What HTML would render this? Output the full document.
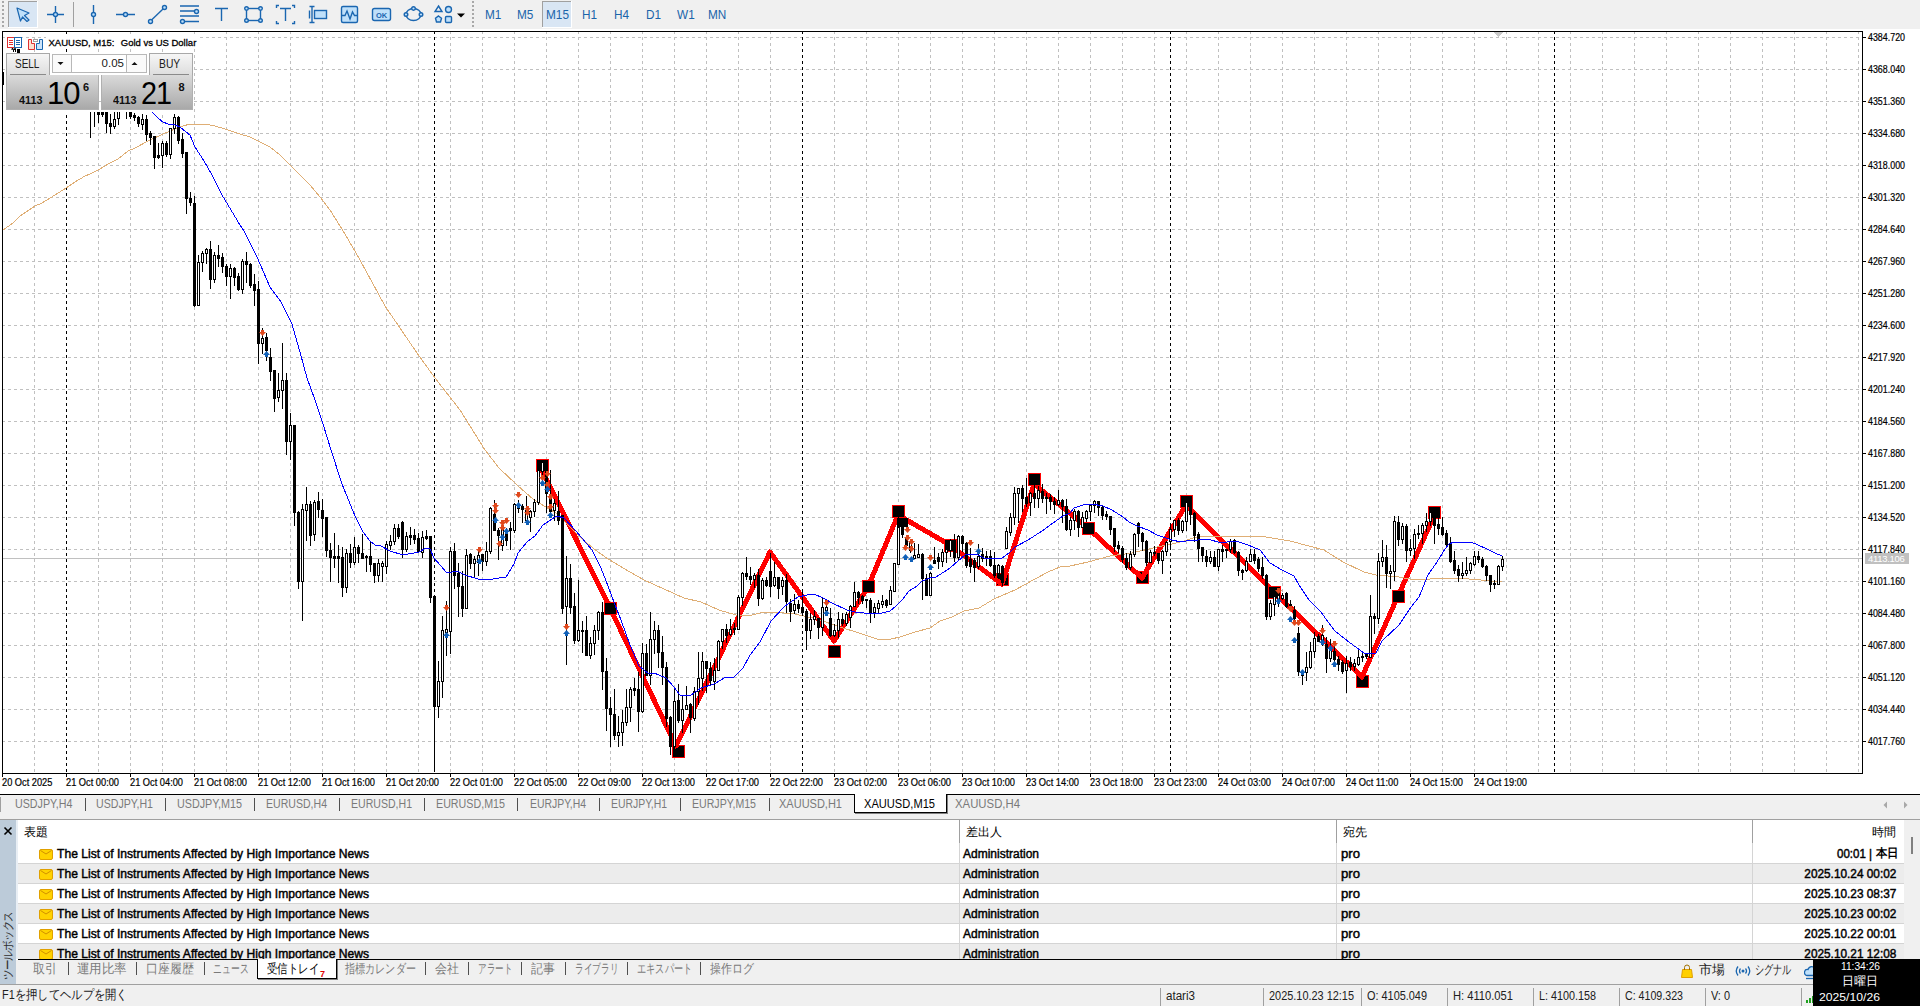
<!DOCTYPE html>
<html><head><meta charset="utf-8">
<style>
*{box-sizing:border-box}
html,body{margin:0;padding:0;width:1920px;height:1006px;overflow:hidden;background:#fff;font-family:"Liberation Sans",sans-serif;position:relative}
.a{position:absolute}
#tb{left:0;top:0;width:1920px;height:29px;background:#f0f0f0}
.tf{position:absolute;top:6.5px;font-size:12.7px;color:#1a64aa;line-height:16px;transform:scaleX(0.93);transform-origin:left top}
.tab{position:absolute;top:797px;font-size:12.5px;color:#808080;line-height:16px;white-space:nowrap}
.tsep{position:absolute;width:1px;height:13px;background:#606060}
.row{position:absolute;left:18px;width:1887px;height:20px;font-size:12.5px;font-weight:bold;color:#000;line-height:20px;white-space:nowrap}
.row span{position:absolute}
.env{position:absolute;left:21px;top:6px;width:13px;height:10px;background:#ffd000;border:1px solid #d89a00;border-radius:2px}
.btab{position:absolute;top:962px;font-size:12.5px;color:#808080;line-height:16px;white-space:nowrap}
.st{position:absolute;top:988px;font-size:12.5px;color:#000;line-height:16px;white-space:nowrap}
.ssep{position:absolute;top:987px;width:1px;height:19px;background:#a0a0a0}
</style></head><body>
<div id="tb" class="a">
 <svg width="1920" height="29" style="position:absolute;left:0;top:0">
  <g fill="#a8a8a8"><rect x="2" y="1" width="2" height="2"/><rect x="2" y="5" width="2" height="2"/><rect x="2" y="9" width="2" height="2"/><rect x="2" y="13" width="2" height="2"/><rect x="2" y="17" width="2" height="2"/><rect x="2" y="21" width="2" height="2"/><rect x="2" y="25" width="2" height="2"/></g>
  <rect x="8" y="1" width="30" height="27" fill="#fff"/><rect x="8" y="1" width="29" height="26" fill="#a0a0a0"/><rect x="9" y="2" width="28" height="25" fill="#d9e6f4"/>
  <path d="M17 8 L29 13 L24.5 15.5 L29 20 L27 21.5 L22.5 17 L20.5 21 Z" fill="#bfe0fa" stroke="#1a66b0" stroke-width="1.2" stroke-linejoin="round"/>
  <g stroke="#1a66b0" stroke-width="1.4" fill="#bfe0fa">
   <path d="M47 14.5H53M58 14.5H64M55.5 6V12M55.5 17V23" fill="none"/><circle cx="55.5" cy="14.5" r="2"/>
   <path d="M93.5 5V12M93.5 17V24" fill="none"/><circle cx="93.5" cy="14.5" r="2"/>
   <path d="M116 14.5H123M128 14.5H135" fill="none"/><circle cx="125.5" cy="14.5" r="2"/>
   <path d="M151.5 20L163 9" fill="none"/><circle cx="150.5" cy="21.5" r="2"/><circle cx="164.5" cy="7.5" r="2"/>
   <path d="M180 6H199M180 11H194M180 16H199M185 21.5H199" fill="none"/><circle cx="196.5" cy="11.5" r="2"/><circle cx="182.5" cy="21.5" r="2"/>
   <path d="M215 8.5H228M221.5 8.5V21" fill="none"/>
   <rect x="246.5" y="8.5" width="14" height="12" fill="none"/><circle cx="246.5" cy="8.5" r="1.8"/><circle cx="260.5" cy="8.5" r="1.8"/><circle cx="246.5" cy="20.5" r="1.8"/><circle cx="260.5" cy="20.5" r="1.8"/>
   <path d="M276.5 8V5.5H279M292 5.5H294.5V8M276.5 21V23.5H279M292 23.5H294.5V21M280 8.5H291M285.5 8.5V21" fill="none"/>
   <rect x="314.5" y="10.5" width="12" height="8"/><path d="M309.5 6.5H314.5M312 6.5V22.5M309.5 22.5H314.5M309.5 10.5V18.5" fill="none"/>
   <rect x="341.5" y="6.5" width="16" height="16" rx="1.5"/><path d="M342 15.5L345 15.5L347 11L350 19L352.5 12L354.5 15.5L357 15.5" fill="none"/>
   <rect x="372.5" y="8.5" width="18" height="12" rx="2"/>
   <ellipse cx="413.5" cy="14.5" rx="7.5" ry="6" fill="none"/><circle cx="413.5" cy="8.5" r="1.8"/><circle cx="406" cy="14.5" r="1.8"/><circle cx="421" cy="14.5" r="1.8"/>
   <path d="M438.5 6L442 11.5H435Z" fill="none"/><circle cx="448.5" cy="9.5" r="3"/><path d="M438.5 16L441.5 18.3L440.5 22H436.5L435.5 18.3Z"/><rect x="445.5" y="16.5" width="6" height="6" rx="1"/>
  </g>
  <text x="376" y="18" font-family="Liberation Sans" font-size="7.5" font-weight="bold" fill="#1a66b0">OK</text>
  <path d="M457 13.5H465L461 17.5Z" fill="#000"/>
  <path d="M73.5 2V27" stroke="#a0a0a0"/>
  <g fill="#a8a8a8"><rect x="472" y="1" width="2" height="2"/><rect x="472" y="5" width="2" height="2"/><rect x="472" y="9" width="2" height="2"/><rect x="472" y="13" width="2" height="2"/><rect x="472" y="17" width="2" height="2"/><rect x="472" y="21" width="2" height="2"/><rect x="472" y="25" width="2" height="2"/></g>
  <rect x="542" y="1" width="30" height="27" fill="#fff"/><rect x="542" y="1" width="29" height="26" fill="#a0a0a0"/><rect x="543" y="2" width="28" height="25" fill="#d9e6f4"/>
 </svg>
 <span class="tf" style="left:485px">M1</span>
 <span class="tf" style="left:517px">M5</span>
 <span class="tf" style="left:546px">M15</span>
 <span class="tf" style="left:582px">H1</span>
 <span class="tf" style="left:614px">H4</span>
 <span class="tf" style="left:646px">D1</span>
 <span class="tf" style="left:677px">W1</span>
 <span class="tf" style="left:708px">MN</span>
</div>
<svg width="1920" height="1006" style="position:absolute;left:0;top:0" shape-rendering="crispEdges">
<path d="M34.5 31V773 M66.5 31V773 M98.5 31V773 M130.5 31V773 M162.5 31V773 M194.5 31V773 M226.5 31V773 M258.5 31V773 M290.5 31V773 M322.5 31V773 M354.5 31V773 M386.5 31V773 M418.5 31V773 M450.5 31V773 M482.5 31V773 M514.5 31V773 M546.5 31V773 M578.5 31V773 M610.5 31V773 M642.5 31V773 M674.5 31V773 M706.5 31V773 M738.5 31V773 M770.5 31V773 M802.5 31V773 M834.5 31V773 M866.5 31V773 M898.5 31V773 M930.5 31V773 M962.5 31V773 M994.5 31V773 M1026.5 31V773 M1058.5 31V773 M1090.5 31V773 M1122.5 31V773 M1154.5 31V773 M1186.5 31V773 M1218.5 31V773 M1250.5 31V773 M1282.5 31V773 M1314.5 31V773 M1346.5 31V773 M1378.5 31V773 M1410.5 31V773 M1442.5 31V773 M1474.5 31V773 M1506.5 31V773 M1538.5 31V773 M1570.5 31V773 M1602.5 31V773 M1634.5 31V773 M1666.5 31V773 M1698.5 31V773 M1730.5 31V773 M1762.5 31V773 M1794.5 31V773 M1826.5 31V773 M1858.5 31V773 M2 37.5H1862 M2 69.5H1862 M2 101.5H1862 M2 133.5H1862 M2 165.5H1862 M2 197.5H1862 M2 229.5H1862 M2 261.5H1862 M2 293.5H1862 M2 325.5H1862 M2 357.5H1862 M2 389.5H1862 M2 421.5H1862 M2 453.5H1862 M2 485.5H1862 M2 517.5H1862 M2 549.5H1862 M2 581.5H1862 M2 613.5H1862 M2 645.5H1862 M2 677.5H1862 M2 709.5H1862 M2 741.5H1862" stroke="#c0c0c0" stroke-width="1" stroke-dasharray="3 3" fill="none"/>
<path d="M66.5 31V773 M434.5 31V773 M802.5 31V773 M1170.5 31V773 M1554.5 31V773" stroke="#000" stroke-width="1" stroke-dasharray="3 3" fill="none"/>
<path d="M3 558.5H1862" stroke="#c0c0c0" stroke-width="1"/>
<g>
<rect x="672.5" y="745.5" width="12" height="12" fill="#000" stroke="#ff0000" stroke-width="1"/>
<rect x="828.5" y="645.5" width="12" height="12" fill="#000" stroke="#ff0000" stroke-width="1"/>
<rect x="996.5" y="573.5" width="12" height="12" fill="#000" stroke="#ff0000" stroke-width="1"/>
<rect x="1136.5" y="571.5" width="12" height="12" fill="#000" stroke="#ff0000" stroke-width="1"/>
<rect x="1356.5" y="675.5" width="12" height="12" fill="#000" stroke="#ff0000" stroke-width="1"/>
<polyline points="542,470 610,608 676,746 770,552 834,641 868,587 898,515 950,545 1002,584 1034,484 1088,528 1142,578 1186,505 1274,592 1362,677 1398,596 1434,516" fill="none" stroke="#ff0000" stroke-width="5" stroke-linejoin="round" shape-rendering="crispEdges"/>
<rect x="536.5" y="459.5" width="12" height="12" fill="#000" stroke="#ff0000" stroke-width="1"/>
<rect x="604.5" y="602.5" width="12" height="12" fill="#000" stroke="#ff0000" stroke-width="1"/>
<rect x="862.5" y="580.5" width="12" height="12" fill="#000" stroke="#ff0000" stroke-width="1"/>
<rect x="892.5" y="505.5" width="12" height="12" fill="#000" stroke="#ff0000" stroke-width="1"/>
<rect x="944.5" y="539.5" width="12" height="12" fill="#000" stroke="#ff0000" stroke-width="1"/>
<rect x="1028.5" y="473.5" width="12" height="12" fill="#000" stroke="#ff0000" stroke-width="1"/>
<rect x="1082.5" y="522.5" width="12" height="12" fill="#000" stroke="#ff0000" stroke-width="1"/>
<rect x="1180.5" y="495.5" width="12" height="12" fill="#000" stroke="#ff0000" stroke-width="1"/>
<rect x="1268.5" y="586.5" width="12" height="12" fill="#000" stroke="#ff0000" stroke-width="1"/>
<rect x="1392.5" y="590.5" width="12" height="12" fill="#000" stroke="#ff0000" stroke-width="1"/>
<rect x="1428.5" y="506.5" width="12" height="12" fill="#000" stroke="#ff0000" stroke-width="1"/>
<rect x="897" y="518" width="11" height="9" fill="#000"/>
<polyline points="3,230 13,223 20,216 35,206 42,203 55,195 66,188 75,182 85,176 90,174 98,170 110,163 118,159 128,151 135,148 150,140 163,134 175,129 183,126 190,124 195,125 205,124 215,126 225,129 240,134 250,137 260,142 270,147 280,155 290,165 300,175 310,185 320,197 330,210 345,234 360,260 385,306 417,353 435,378 460,410 485,450 499,468 517,485 534,500 556,513 565,522 578,535 594,549 608,559 630,572 644,580 684,598 701,602 719,610 736,615 748,616 760,613 771,612 784,613 795,614 817,619 840,627 862,634 877,639 891,639 900,637 915,632 930,628 940,621 952,617 964,611 979,608 989,602 994,599 1010,592 1015,590 1035,579 1048,572 1060,567 1070,566 1088,562 1110,556 1132,553 1153,548 1166,545 1172,544 1184,541 1193,538 1208,536 1220,536 1244,536 1260,536 1290,541 1324,550 1343,562 1364,572 1376,575 1399,577 1415,580 1446,578 1457,578 1481,580 1491,581 1502,582" fill="none" stroke="#dfae75" stroke-width="1" shape-rendering="crispEdges"/>
<path d="M90.5 108V138 M94.5 108V127 M98.5 112V123 M102.5 112V117 M106.5 112V133 M110.5 114V134 M114.5 112V119 M114.5 127V129 M118.5 108V109 M118.5 119V125 M126.5 108V119 M130.5 112V119 M134.5 113V121 M138.5 116V127 M142.5 114V119 M142.5 125V130 M146.5 115V141 M150.5 131V145 M154.5 136V169 M158.5 143V159 M162.5 141V143 M162.5 156V168 M166.5 141V157 M170.5 155V159 M174.5 114V117 M174.5 129V134 M178.5 116V144 M182.5 133V158 M186.5 152V214 M190.5 192V206 M194.5 196V307 M198.5 255V262 M202.5 251V253 M202.5 263V272 M206.5 248V249 M206.5 254V264 M210.5 241V289 M214.5 252V255 M214.5 280V283 M218.5 245V267 M222.5 253V273 M226.5 264V286 M230.5 264V268 M230.5 277V299 M234.5 267V286 M238.5 273V291 M242.5 259V261 M242.5 290V294 M246.5 252V283 M250.5 263V288 M254.5 274V306 M258.5 281V364 M262.5 328V338 M262.5 344V354 M266.5 333V361 M270.5 348V381 M274.5 370V412 M278.5 373V390 M278.5 398V402 M282.5 343V380 M282.5 391V409 M286.5 373V455 M290.5 413V425 M290.5 442V460 M294.5 425V526 M298.5 511V589 M302.5 504V509 M302.5 582V621 M306.5 487V504 M306.5 511V541 M310.5 501V546 M314.5 500V502 M314.5 535V541 M318.5 492V518 M322.5 499V537 M326.5 517V557 M330.5 543V582 M334.5 533V568 M338.5 545V583 M342.5 547V597 M346.5 549V553 M346.5 588V593 M350.5 544V568 M354.5 537V547 M354.5 563V565 M358.5 545V563 M362.5 534V559 M366.5 555V572 M370.5 541V572 M374.5 563V583 M378.5 559V563 M378.5 576V582 M382.5 561V563 M382.5 567V582 M386.5 541V544 M386.5 567V574 M390.5 535V541 M390.5 546V550 M394.5 524V528 M394.5 542V545 M398.5 524V539 M402.5 521V558 M406.5 532V536 M406.5 550V552 M410.5 527V545 M414.5 529V544 M418.5 533V553 M422.5 531V537 M422.5 553V558 M426.5 530V540 M430.5 537V603 M434.5 596V772 M438.5 661V681 M438.5 707V718 M442.5 616V630 M442.5 682V698 M446.5 601V629 M446.5 633V656 M450.5 547V551 M450.5 632V654 M454.5 543V589 M458.5 563V617 M462.5 571V617 M466.5 549V555 M470.5 553V569 M474.5 556V559 M474.5 564V577 M478.5 550V555 M478.5 563V576 M482.5 554V571 M486.5 542V551 M486.5 562V566 M490.5 507V508 M490.5 552V554 M494.5 500V531 M498.5 528V560 M502.5 525V528 M502.5 546V551 M506.5 528V546 M510.5 522V550 M514.5 503V504 M514.5 531V533 M518.5 500V505 M518.5 509V513 M522.5 504V523 M526.5 496V510 M526.5 521V523 M530.5 510V511 M530.5 518V532 M534.5 499V502 M534.5 512V517 M538.5 503V505 M542.5 460V462 M542.5 472V481 M546.5 462V513 M550.5 470V513 M554.5 499V503 M554.5 511V521 M558.5 491V525 M562.5 515V614 M566.5 556V578 M566.5 607V665 M570.5 564V614 M574.5 593V644 M578.5 580V630 M578.5 641V642 M582.5 621V653 M586.5 616V656 M590.5 637V643 M590.5 656V659 M594.5 625V630 M594.5 644V655 M598.5 611V612 M598.5 631V640 M602.5 602V690 M606.5 658V731 M610.5 697V747 M614.5 689V740 M618.5 716V732 M618.5 736V747 M622.5 710V722 M622.5 733V746 M626.5 689V707 M626.5 723V726 M630.5 687V689 M630.5 708V722 M634.5 678V696 M638.5 672V732 M642.5 643V653 M642.5 712V713 M646.5 644V676 M650.5 612V639 M650.5 676V685 M654.5 621V630 M654.5 640V654 M658.5 625V668 M662.5 636V685 M666.5 662V727 M670.5 716V755 M674.5 689V701 M674.5 747V748 M678.5 684V723 M682.5 696V709 M682.5 721V733 M686.5 686V705 M690.5 703V733 M694.5 687V691 M694.5 719V721 M698.5 652V678 M698.5 692V705 M702.5 652V661 M702.5 679V691 M706.5 661V693 M710.5 662V686 M714.5 658V670 M714.5 682V690 M718.5 640V641 M722.5 642V649 M726.5 624V643 M730.5 619V629 M730.5 635V636 M734.5 623V635 M738.5 595V597 M742.5 572V573 M742.5 598V606 M746.5 557V580 M750.5 567V585 M754.5 573V575 M754.5 580V588 M758.5 569V606 M762.5 578V580 M762.5 599V600 M766.5 577V587 M770.5 553V597 M774.5 562V577 M774.5 586V587 M778.5 577V599 M782.5 577V580 M782.5 587V595 M786.5 574V613 M790.5 599V622 M794.5 594V604 M794.5 611V614 M798.5 600V613 M802.5 590V616 M806.5 609V650 M810.5 613V619 M810.5 631V639 M814.5 610V616 M814.5 620V625 M818.5 618V639 M822.5 598V607 M822.5 628V636 M826.5 600V607 M826.5 611V613 M830.5 608V637 M834.5 624V630 M834.5 636V637 M838.5 612V619 M838.5 631V638 M842.5 613V626 M846.5 612V614 M846.5 624V626 M850.5 605V606 M850.5 618V628 M854.5 582V592 M858.5 591V604 M862.5 595V604 M866.5 599V608 M870.5 598V623 M874.5 603V607 M874.5 613V618 M878.5 600V603 M878.5 609V613 M882.5 595V601 M882.5 605V608 M886.5 599V608 M890.5 586V590 M898.5 506V527 M902.5 527V538 M906.5 535V549 M910.5 540V542 M910.5 551V553 M914.5 543V555 M918.5 544V554 M922.5 553V600 M926.5 574V596 M930.5 572V573 M934.5 547V564 M938.5 553V569 M942.5 549V552 M942.5 562V567 M946.5 545V549 M946.5 553V563 M950.5 539V540 M950.5 551V557 M954.5 534V562 M958.5 535V536 M958.5 558V560 M962.5 535V552 M966.5 542V568 M970.5 548V573 M974.5 558V582 M978.5 544V556 M978.5 567V569 M982.5 548V562 M986.5 551V566 M990.5 550V567 M994.5 552V578 M998.5 564V565 M998.5 574V579 M1002.5 565V586 M1006.5 527V531 M1010.5 513V517 M1010.5 533V536 M1014.5 487V493 M1014.5 518V525 M1018.5 494V523 M1022.5 485V512 M1026.5 478V507 M1030.5 492V493 M1030.5 503V516 M1034.5 484V508 M1038.5 486V490 M1038.5 499V508 M1042.5 484V503 M1046.5 493V514 M1050.5 494V510 M1054.5 497V514 M1058.5 490V500 M1058.5 505V506 M1062.5 499V523 M1066.5 499V531 M1070.5 517V520 M1070.5 530V536 M1074.5 509V511 M1074.5 521V530 M1078.5 510V537 M1082.5 512V517 M1086.5 510V511 M1086.5 519V522 M1090.5 504V505 M1090.5 512V521 M1094.5 500V501 M1094.5 506V513 M1098.5 501V516 M1102.5 506V520 M1106.5 511V520 M1110.5 516V535 M1114.5 528V552 M1118.5 541V553 M1122.5 546V563 M1126.5 553V570 M1130.5 551V554 M1130.5 568V570 M1134.5 533V534 M1134.5 555V557 M1138.5 522V547 M1142.5 532V551 M1146.5 540V566 M1150.5 550V552 M1154.5 546V556 M1158.5 553V564 M1162.5 550V551 M1162.5 561V574 M1166.5 541V542 M1166.5 552V556 M1170.5 523V529 M1170.5 542V550 M1174.5 530V537 M1178.5 518V535 M1182.5 520V521 M1182.5 531V533 M1186.5 497V502 M1186.5 522V531 M1190.5 502V525 M1194.5 512V542 M1198.5 532V562 M1202.5 547V562 M1206.5 550V567 M1210.5 551V557 M1210.5 562V564 M1214.5 551V567 M1218.5 567V571 M1222.5 545V562 M1226.5 549V558 M1230.5 539V541 M1230.5 550V553 M1234.5 539V554 M1238.5 551V576 M1242.5 569V580 M1246.5 557V561 M1246.5 571V572 M1250.5 549V554 M1254.5 549V564 M1258.5 557V572 M1262.5 557V579 M1266.5 574V620 M1270.5 600V603 M1270.5 617V620 M1274.5 590V596 M1274.5 605V616 M1278.5 593V595 M1278.5 604V607 M1282.5 593V595 M1282.5 599V600 M1286.5 592V608 M1290.5 600V607 M1294.5 606V620 M1298.5 627V676 M1302.5 671V672 M1302.5 676V685 M1306.5 652V667 M1306.5 673V681 M1310.5 642V651 M1310.5 668V669 M1314.5 632V638 M1314.5 652V658 M1318.5 634V642 M1322.5 625V635 M1322.5 642V646 M1326.5 637V673 M1330.5 639V649 M1330.5 659V662 M1334.5 644V662 M1338.5 656V671 M1342.5 660V674 M1346.5 656V663 M1346.5 671V693 M1350.5 657V671 M1354.5 659V663 M1354.5 667V671 M1358.5 648V657 M1358.5 665V666 M1362.5 651V662 M1366.5 653V659 M1370.5 595V616 M1374.5 613V634 M1378.5 553V561 M1378.5 619V624 M1382.5 540V557 M1382.5 562V567 M1386.5 545V588 M1390.5 565V571 M1390.5 574V589 M1394.5 516V521 M1394.5 572V581 M1398.5 516V546 M1402.5 523V526 M1402.5 540V544 M1406.5 524V562 M1410.5 539V548 M1410.5 551V556 M1414.5 529V534 M1414.5 549V559 M1418.5 525V533 M1418.5 535V539 M1422.5 523V525 M1422.5 534V544 M1426.5 513V521 M1426.5 526V532 M1430.5 510V512 M1430.5 522V526 M1434.5 510V544 M1438.5 517V535 M1442.5 517V536 M1446.5 530V546 M1450.5 537V563 M1454.5 551V574 M1458.5 565V582 M1462.5 562V573 M1462.5 576V579 M1466.5 557V570 M1466.5 574V576 M1470.5 562V563 M1470.5 571V574 M1474.5 551V556 M1474.5 565V566 M1478.5 551V563 M1482.5 557V568 M1486.5 565V581 M1490.5 575V592 M1494.5 580V589 M1498.5 565V566 M1502.5 556V559 M1502.5 567V571" stroke="#000" stroke-width="1" fill="none"/>
<path d="M89 108h3v1h-3z M93 108h3v1h-3z M97 112h3v3h-3z M101 112h3v3h-3z M105 112h3v12h-3z M109 123h3v4h-3z M125 108h3v1h-3z M129 112h3v5h-3z M133 115h3v3h-3z M137 117h3v7h-3z M145 119h3v16h-3z M149 133h3v5h-3z M153 136h3v22h-3z M157 155h3v3h-3z M165 143h3v12h-3z M177 117h3v24h-3z M181 139h3v15h-3z M185 152h3v47h-3z M189 198h3v5h-3z M193 203h3v103h-3z M209 249h3v31h-3z M217 255h3v4h-3z M221 257h3v10h-3z M225 266h3v11h-3z M233 268h3v10h-3z M237 276h3v14h-3z M245 261h3v4h-3z M249 264h3v22h-3z M253 284h3v7h-3z M257 289h3v55h-3z M265 337h3v14h-3z M269 357h3v15h-3z M273 370h3v29h-3z M285 380h3v62h-3z M293 425h3v88h-3z M297 512h3v70h-3z M309 504h3v32h-3z M317 501h3v9h-3z M321 510h3v9h-3z M325 517h3v34h-3z M329 550h3v8h-3z M333 556h3v3h-3z M337 556h3v3h-3z M341 557h3v31h-3z M349 553h3v10h-3z M357 547h3v7h-3z M361 553h3v6h-3z M365 556h3v2h-3z M369 556h3v9h-3z M373 563h3v13h-3z M397 528h3v9h-3z M401 522h3v28h-3z M409 535h3v3h-3z M413 535h3v5h-3z M417 538h3v14h-3z M425 536h3v3h-3z M429 536h3v62h-3z M433 596h3v111h-3z M453 551h3v25h-3z M457 573h3v14h-3z M461 586h3v23h-3z M469 554h3v10h-3z M481 554h3v8h-3z M493 514h3v17h-3z M497 530h3v6h-3z M505 530h3v11h-3z M509 528h3v3h-3z M521 506h3v4h-3z M545 470h3v24h-3z M549 494h3v18h-3z M557 511h3v10h-3z M561 515h3v94h-3z M569 578h3v30h-3z M573 606h3v35h-3z M581 630h3v2h-3z M585 630h3v26h-3z M601 612h3v60h-3z M605 671h3v38h-3z M609 708h3v7h-3z M613 714h3v22h-3z M633 688h3v3h-3z M637 689h3v23h-3z M645 653h3v23h-3z M657 630h3v23h-3z M661 652h3v16h-3z M665 667h3v52h-3z M669 717h3v30h-3z M677 700h3v21h-3z M689 704h3v14h-3z M705 661h3v8h-3z M709 668h3v13h-3z M725 629h3v7h-3z M733 628h3v2h-3z M745 573h3v4h-3z M749 576h3v4h-3z M757 575h3v24h-3z M765 580h3v6h-3z M769 571h3v16h-3z M777 577h3v12h-3z M785 580h3v22h-3z M789 603h3v9h-3z M797 604h3v5h-3z M801 607h3v6h-3z M805 611h3v20h-3z M817 618h3v10h-3z M829 618h3v18h-3z M841 619h3v5h-3z M857 592h3v6h-3z M861 596h3v5h-3z M865 599h3v2h-3z M869 600h3v13h-3z M885 600h3v6h-3z M901 527h3v8h-3z M905 538h3v8h-3z M921 554h3v25h-3z M925 578h3v18h-3z M933 560h3v4h-3z M937 557h3v5h-3z M953 540h3v18h-3z M961 536h3v8h-3z M965 543h3v23h-3z M969 559h3v8h-3z M973 560h3v8h-3z M981 554h3v5h-3z M985 556h3v3h-3z M989 556h3v10h-3z M993 565h3v11h-3z M1001 566h3v17h-3z M1021 488h3v11h-3z M1025 497h3v7h-3z M1033 493h3v6h-3z M1041 491h3v8h-3z M1045 497h3v2h-3z M1049 497h3v5h-3z M1053 501h3v4h-3z M1061 500h3v7h-3z M1065 506h3v24h-3z M1077 511h3v17h-3z M1097 501h3v7h-3z M1101 507h3v9h-3z M1105 514h3v3h-3z M1109 516h3v14h-3z M1113 528h3v19h-3z M1117 545h3v4h-3z M1121 548h3v12h-3z M1125 558h3v10h-3z M1137 523h3v11h-3z M1141 533h3v9h-3z M1145 541h3v22h-3z M1153 552h3v2h-3z M1157 553h3v8h-3z M1177 520h3v11h-3z M1189 502h3v13h-3z M1193 513h3v23h-3z M1197 534h3v15h-3z M1201 547h3v9h-3z M1205 556h3v6h-3z M1213 557h3v10h-3z M1221 549h3v3h-3z M1225 549h3v2h-3z M1233 540h3v13h-3z M1237 552h3v19h-3z M1241 570h3v3h-3z M1253 554h3v7h-3z M1257 559h3v10h-3z M1261 567h3v9h-3z M1265 575h3v42h-3z M1285 593h3v14h-3z M1289 604h3v3h-3z M1293 610h3v9h-3z M1297 633h3v39h-3z M1317 636h3v6h-3z M1325 644h3v15h-3z M1333 651h3v9h-3z M1337 659h3v6h-3z M1341 662h3v10h-3z M1349 662h3v5h-3z M1361 656h3v2h-3z M1365 654h3v3h-3z M1373 616h3v3h-3z M1385 557h3v17h-3z M1397 522h3v18h-3z M1405 526h3v25h-3z M1433 516h3v10h-3z M1437 524h3v5h-3z M1441 527h3v8h-3z M1445 533h3v12h-3z M1449 543h3v19h-3z M1453 560h3v11h-3z M1457 569h3v7h-3z M1477 556h3v4h-3z M1481 559h3v8h-3z M1485 566h3v10h-3z M1489 575h3v10h-3z M1493 583h3v2h-3z" fill="#000"/>
<g fill="#fff" stroke="#000" stroke-width="1"><rect x="113.5" y="119.5" width="2" height="7"/><rect x="117.5" y="109.5" width="2" height="9"/><rect x="141.5" y="119.5" width="2" height="5"/><rect x="161.5" y="143.5" width="2" height="12"/><rect x="169.5" y="128.5" width="2" height="26"/><rect x="173.5" y="117.5" width="2" height="11"/><rect x="197.5" y="262.5" width="2" height="43"/><rect x="201.5" y="253.5" width="2" height="9"/><rect x="205.5" y="249.5" width="2" height="4"/><rect x="213.5" y="255.5" width="2" height="24"/><rect x="229.5" y="268.5" width="2" height="8"/><rect x="241.5" y="261.5" width="2" height="28"/><rect x="261.5" y="338.5" width="2" height="5"/><rect x="277.5" y="390.5" width="2" height="7"/><rect x="281.5" y="380.5" width="2" height="10"/><rect x="289.5" y="425.5" width="2" height="16"/><rect x="301.5" y="509.5" width="2" height="72"/><rect x="305.5" y="504.5" width="2" height="6"/><rect x="313.5" y="502.5" width="2" height="32"/><rect x="345.5" y="553.5" width="2" height="34"/><rect x="353.5" y="547.5" width="2" height="15"/><rect x="377.5" y="563.5" width="2" height="12"/><rect x="381.5" y="563.5" width="2" height="3"/><rect x="385.5" y="544.5" width="2" height="22"/><rect x="389.5" y="541.5" width="2" height="4"/><rect x="393.5" y="528.5" width="2" height="13"/><rect x="405.5" y="536.5" width="2" height="13"/><rect x="421.5" y="537.5" width="2" height="15"/><rect x="437.5" y="681.5" width="2" height="25"/><rect x="441.5" y="630.5" width="2" height="51"/><rect x="445.5" y="629.5" width="2" height="3"/><rect x="449.5" y="551.5" width="2" height="80"/><rect x="465.5" y="555.5" width="2" height="53"/><rect x="473.5" y="559.5" width="2" height="4"/><rect x="477.5" y="555.5" width="2" height="7"/><rect x="485.5" y="551.5" width="2" height="10"/><rect x="489.5" y="508.5" width="2" height="43"/><rect x="501.5" y="528.5" width="2" height="17"/><rect x="513.5" y="504.5" width="2" height="26"/><rect x="517.5" y="505.5" width="2" height="3"/><rect x="525.5" y="510.5" width="2" height="10"/><rect x="529.5" y="511.5" width="2" height="6"/><rect x="533.5" y="502.5" width="2" height="9"/><rect x="537.5" y="470.5" width="2" height="32"/><rect x="541.5" y="462.5" width="2" height="9"/><rect x="553.5" y="503.5" width="2" height="7"/><rect x="565.5" y="578.5" width="2" height="28"/><rect x="577.5" y="630.5" width="2" height="10"/><rect x="589.5" y="643.5" width="2" height="12"/><rect x="593.5" y="630.5" width="2" height="13"/><rect x="597.5" y="612.5" width="2" height="18"/><rect x="617.5" y="732.5" width="2" height="3"/><rect x="621.5" y="722.5" width="2" height="10"/><rect x="625.5" y="707.5" width="2" height="15"/><rect x="629.5" y="689.5" width="2" height="18"/><rect x="641.5" y="653.5" width="2" height="58"/><rect x="649.5" y="639.5" width="2" height="36"/><rect x="653.5" y="630.5" width="2" height="9"/><rect x="673.5" y="701.5" width="2" height="45"/><rect x="681.5" y="709.5" width="2" height="11"/><rect x="685.5" y="705.5" width="2" height="4"/><rect x="693.5" y="691.5" width="2" height="27"/><rect x="697.5" y="678.5" width="2" height="13"/><rect x="701.5" y="661.5" width="2" height="17"/><rect x="713.5" y="670.5" width="2" height="11"/><rect x="717.5" y="641.5" width="2" height="29"/><rect x="721.5" y="629.5" width="2" height="12"/><rect x="729.5" y="629.5" width="2" height="5"/><rect x="737.5" y="597.5" width="2" height="32"/><rect x="741.5" y="573.5" width="2" height="24"/><rect x="753.5" y="575.5" width="2" height="4"/><rect x="761.5" y="580.5" width="2" height="18"/><rect x="773.5" y="577.5" width="2" height="8"/><rect x="781.5" y="580.5" width="2" height="6"/><rect x="793.5" y="604.5" width="2" height="6"/><rect x="809.5" y="619.5" width="2" height="11"/><rect x="813.5" y="616.5" width="2" height="3"/><rect x="821.5" y="607.5" width="2" height="20"/><rect x="825.5" y="607.5" width="2" height="3"/><rect x="833.5" y="630.5" width="2" height="5"/><rect x="837.5" y="619.5" width="2" height="11"/><rect x="845.5" y="614.5" width="2" height="9"/><rect x="849.5" y="606.5" width="2" height="11"/><rect x="853.5" y="592.5" width="2" height="14"/><rect x="873.5" y="607.5" width="2" height="5"/><rect x="877.5" y="603.5" width="2" height="5"/><rect x="881.5" y="601.5" width="2" height="3"/><rect x="889.5" y="590.5" width="2" height="14"/><rect x="893.5" y="563.5" width="2" height="28"/><rect x="897.5" y="527.5" width="2" height="37"/><rect x="909.5" y="542.5" width="2" height="8"/><rect x="913.5" y="555.5" width="2" height="3"/><rect x="917.5" y="554.5" width="2" height="3"/><rect x="929.5" y="573.5" width="2" height="22"/><rect x="941.5" y="552.5" width="2" height="9"/><rect x="945.5" y="549.5" width="2" height="3"/><rect x="949.5" y="540.5" width="2" height="10"/><rect x="957.5" y="536.5" width="2" height="21"/><rect x="977.5" y="556.5" width="2" height="10"/><rect x="997.5" y="565.5" width="2" height="8"/><rect x="1005.5" y="531.5" width="2" height="17"/><rect x="1009.5" y="517.5" width="2" height="15"/><rect x="1013.5" y="493.5" width="2" height="24"/><rect x="1017.5" y="488.5" width="2" height="5"/><rect x="1029.5" y="493.5" width="2" height="9"/><rect x="1037.5" y="490.5" width="2" height="8"/><rect x="1057.5" y="500.5" width="2" height="4"/><rect x="1069.5" y="520.5" width="2" height="9"/><rect x="1073.5" y="511.5" width="2" height="9"/><rect x="1081.5" y="517.5" width="2" height="10"/><rect x="1085.5" y="511.5" width="2" height="7"/><rect x="1089.5" y="505.5" width="2" height="6"/><rect x="1093.5" y="501.5" width="2" height="4"/><rect x="1129.5" y="554.5" width="2" height="13"/><rect x="1133.5" y="534.5" width="2" height="20"/><rect x="1149.5" y="552.5" width="2" height="10"/><rect x="1161.5" y="551.5" width="2" height="9"/><rect x="1165.5" y="542.5" width="2" height="9"/><rect x="1169.5" y="529.5" width="2" height="12"/><rect x="1173.5" y="520.5" width="2" height="9"/><rect x="1181.5" y="521.5" width="2" height="9"/><rect x="1185.5" y="502.5" width="2" height="19"/><rect x="1209.5" y="557.5" width="2" height="4"/><rect x="1217.5" y="549.5" width="2" height="17"/><rect x="1229.5" y="541.5" width="2" height="8"/><rect x="1245.5" y="561.5" width="2" height="9"/><rect x="1249.5" y="554.5" width="2" height="7"/><rect x="1269.5" y="603.5" width="2" height="13"/><rect x="1273.5" y="596.5" width="2" height="8"/><rect x="1277.5" y="595.5" width="2" height="8"/><rect x="1281.5" y="595.5" width="2" height="3"/><rect x="1301.5" y="672.5" width="2" height="3"/><rect x="1305.5" y="667.5" width="2" height="5"/><rect x="1309.5" y="651.5" width="2" height="16"/><rect x="1313.5" y="638.5" width="2" height="13"/><rect x="1321.5" y="635.5" width="2" height="6"/><rect x="1329.5" y="649.5" width="2" height="9"/><rect x="1345.5" y="663.5" width="2" height="7"/><rect x="1353.5" y="663.5" width="2" height="3"/><rect x="1357.5" y="657.5" width="2" height="7"/><rect x="1369.5" y="616.5" width="2" height="41"/><rect x="1377.5" y="561.5" width="2" height="57"/><rect x="1381.5" y="557.5" width="2" height="4"/><rect x="1389.5" y="571.5" width="2" height="2"/><rect x="1393.5" y="521.5" width="2" height="50"/><rect x="1401.5" y="526.5" width="2" height="13"/><rect x="1409.5" y="548.5" width="2" height="2"/><rect x="1413.5" y="534.5" width="2" height="14"/><rect x="1417.5" y="533.5" width="2" height="1"/><rect x="1421.5" y="525.5" width="2" height="8"/><rect x="1425.5" y="521.5" width="2" height="4"/><rect x="1429.5" y="512.5" width="2" height="9"/><rect x="1461.5" y="573.5" width="2" height="2"/><rect x="1465.5" y="570.5" width="2" height="3"/><rect x="1469.5" y="563.5" width="2" height="7"/><rect x="1473.5" y="556.5" width="2" height="8"/><rect x="1497.5" y="566.5" width="2" height="18"/><rect x="1501.5" y="559.5" width="2" height="7"/></g>
<polyline points="152,112 159,119 163,122 168,124 175,125 180,127 186,132 190,135 195,147 204,161 212,175 222,195 240,225 244,231 257,257 270,287 281,302 292,324 300,352 307,378 315,400 323,424 331,450 342,484 355,516 363,532 370,541 375,545 381,546 390,551 403,555 419,552 426,548 430,549 434,558 447,573 457,571 465,575 478,579 486,580 506,577 514,564 518,553 527,542 535,536 543,525 552,519 557,516 564,518 576,531 592,550 601,568 608,586 615,605 621,620 630,645 639,666 649,674 654,673 666,678 674,687 680,695 691,695 701,688 714,684 726,677 734,677 743,668 750,655 760,642 771,621 784,607 788,604 798,597 807,595 814,594 823,598 832,603 847,610 855,612 864,613 882,613 890,611 896,606 902,600 909,591 917,586 922,581 930,578 936,577 947,570 950,568 958,561 965,555 976,554 984,558 993,559 1002,558 1009,553 1015,547 1028,540 1042,531 1053,523 1063,516 1070,513 1074,508 1083,505 1092,504 1103,506 1112,510 1123,517 1129,522 1137,526 1148,530 1157,535 1166,538 1172,540 1181,542 1191,540 1198,540 1208,539 1211,540 1218,542 1227,542 1236,541 1248,545 1260,550 1270,563 1282,570 1294,576 1299,585 1309,600 1321,612 1328,622 1335,631 1345,639 1357,648 1364,653 1370,654 1376,653 1382,641 1399,625 1411,607 1419,597 1428,575 1437,562 1445,549 1449,544 1454,542 1457,542 1462,543 1465,542 1471,542 1478,545 1487,549 1495,553 1502,556" fill="none" stroke="#0000ff" stroke-width="1" shape-rendering="crispEdges"/>
<path d="M261 330h3v2h2l-3.5 4l-3.5 -4h2z M445 605h3v2h2l-3.5 4l-3.5 -4h2z M478 547h3v2h2l-3.5 4l-3.5 -4h2z M494 503h3v2h2l-3.5 4l-3.5 -4h2z M494 508h3v2h2l-3.5 4l-3.5 -4h2z M501 520h3v2h2l-3.5 4l-3.5 -4h2z M505 518h3v2h2l-3.5 4l-3.5 -4h2z M501 525h3v2h2l-3.5 4l-3.5 -4h2z M498 541h3v2h2l-3.5 4l-3.5 -4h2z M517 492h3v2h2l-3.5 4l-3.5 -4h2z M526 506h3v2h2l-3.5 4l-3.5 -4h2z M526 510h3v2h2l-3.5 4l-3.5 -4h2z M541 475h3v2h2l-3.5 4l-3.5 -4h2z M546 471h3v2h2l-3.5 4l-3.5 -4h2z M546 482h3v2h2l-3.5 4l-3.5 -4h2z M549 494h3v2h2l-3.5 4l-3.5 -4h2z M549 504h3v2h2l-3.5 4l-3.5 -4h2z M565 624h3v2h2l-3.5 4l-3.5 -4h2z M825 600h3v2h2l-3.5 4l-3.5 -4h2z M906 527h3v2h2l-3.5 4l-3.5 -4h2z M906 535h3v2h2l-3.5 4l-3.5 -4h2z M910 539h3v2h2l-3.5 4l-3.5 -4h2z M904 545h3v2h2l-3.5 4l-3.5 -4h2z M910 546h3v2h2l-3.5 4l-3.5 -4h2z M929 555h3v2h2l-3.5 4l-3.5 -4h2z M969 540h3v2h2l-3.5 4l-3.5 -4h2z M1277 588h3v2h2l-3.5 4l-3.5 -4h2z M1289 606h3v2h2l-3.5 4l-3.5 -4h2z M1293 620h3v2h2l-3.5 4l-3.5 -4h2z M1297 620h3v2h2l-3.5 4l-3.5 -4h2z M1321 628h3v2h2l-3.5 4l-3.5 -4h2z M1333 641h3v2h2l-3.5 4l-3.5 -4h2z" fill="#e0481c" shape-rendering="auto"/>
<path d="M265 357h3v-2h2l-3.5 -4l-3.5 4h2z M445 638h3v-2h2l-3.5 -4l-3.5 4h2z M478 564h3v-2h2l-3.5 -4l-3.5 4h2z M494 523h3v-2h2l-3.5 -4l-3.5 4h2z M501 540h3v-2h2l-3.5 -4l-3.5 4h2z M505 534h3v-2h2l-3.5 -4l-3.5 4h2z M517 508h3v-2h2l-3.5 -4l-3.5 4h2z M526 525h3v-2h2l-3.5 -4l-3.5 4h2z M541 486h3v-2h2l-3.5 -4l-3.5 4h2z M546 492h3v-2h2l-3.5 -4l-3.5 4h2z M549 518h3v-2h2l-3.5 -4l-3.5 4h2z M565 636h3v-2h2l-3.5 -4l-3.5 4h2z M825 616h3v-2h2l-3.5 -4l-3.5 4h2z M904 560h3v-2h2l-3.5 -4l-3.5 4h2z M910 562h3v-2h2l-3.5 -4l-3.5 4h2z M929 570h3v-2h2l-3.5 -4l-3.5 4h2z M977 554h3v-2h2l-3.5 -4l-3.5 4h2z M1277 604h3v-2h2l-3.5 -4l-3.5 4h2z M1289 622h3v-2h2l-3.5 -4l-3.5 4h2z M1293 643h3v-2h2l-3.5 -4l-3.5 4h2z M1301 675h3v-2h2l-3.5 -4l-3.5 4h2z M1321 645h3v-2h2l-3.5 -4l-3.5 4h2z M1329 651h3v-2h2l-3.5 -4l-3.5 4h2z M1333 667h3v-2h2l-3.5 -4l-3.5 4h2z" fill="#1060b8" shape-rendering="auto"/>
</g>
<path d="M1494 32h9l-4.5 5z" fill="#c8c8c8"/>
<path d="M2.5 31.5H1862.5V773.5H2.5Z" fill="none" stroke="#000" stroke-width="1"/>
<path d="M1862 37.5H1866 M1862 69.5H1866 M1862 101.5H1866 M1862 133.5H1866 M1862 165.5H1866 M1862 197.5H1866 M1862 229.5H1866 M1862 261.5H1866 M1862 293.5H1866 M1862 325.5H1866 M1862 357.5H1866 M1862 389.5H1866 M1862 421.5H1866 M1862 453.5H1866 M1862 485.5H1866 M1862 517.5H1866 M1862 549.5H1866 M1862 581.5H1866 M1862 613.5H1866 M1862 645.5H1866 M1862 677.5H1866 M1862 709.5H1866 M1862 741.5H1866 M2.5 773V777 M66.5 773V777 M130.5 773V777 M194.5 773V777 M258.5 773V777 M322.5 773V777 M386.5 773V777 M450.5 773V777 M514.5 773V777 M578.5 773V777 M642.5 773V777 M706.5 773V777 M770.5 773V777 M834.5 773V777 M898.5 773V777 M962.5 773V777 M1026.5 773V777 M1090.5 773V777 M1154.5 773V777 M1218.5 773V777 M1282.5 773V777 M1346.5 773V777 M1410.5 773V777 M1474.5 773V777" stroke="#000" stroke-width="1"/>
<g font-family="Liberation Sans, sans-serif" font-size="10" fill="#000" stroke="#000" stroke-width="0.2" shape-rendering="auto">
<text x="1868" y="41" textLength="37" lengthAdjust="spacingAndGlyphs">4384.720</text>
<text x="1868" y="73" textLength="37" lengthAdjust="spacingAndGlyphs">4368.040</text>
<text x="1868" y="105" textLength="37" lengthAdjust="spacingAndGlyphs">4351.360</text>
<text x="1868" y="137" textLength="37" lengthAdjust="spacingAndGlyphs">4334.680</text>
<text x="1868" y="169" textLength="37" lengthAdjust="spacingAndGlyphs">4318.000</text>
<text x="1868" y="201" textLength="37" lengthAdjust="spacingAndGlyphs">4301.320</text>
<text x="1868" y="233" textLength="37" lengthAdjust="spacingAndGlyphs">4284.640</text>
<text x="1868" y="265" textLength="37" lengthAdjust="spacingAndGlyphs">4267.960</text>
<text x="1868" y="297" textLength="37" lengthAdjust="spacingAndGlyphs">4251.280</text>
<text x="1868" y="329" textLength="37" lengthAdjust="spacingAndGlyphs">4234.600</text>
<text x="1868" y="361" textLength="37" lengthAdjust="spacingAndGlyphs">4217.920</text>
<text x="1868" y="393" textLength="37" lengthAdjust="spacingAndGlyphs">4201.240</text>
<text x="1868" y="425" textLength="37" lengthAdjust="spacingAndGlyphs">4184.560</text>
<text x="1868" y="457" textLength="37" lengthAdjust="spacingAndGlyphs">4167.880</text>
<text x="1868" y="489" textLength="37" lengthAdjust="spacingAndGlyphs">4151.200</text>
<text x="1868" y="521" textLength="37" lengthAdjust="spacingAndGlyphs">4134.520</text>
<text x="1868" y="553" textLength="37" lengthAdjust="spacingAndGlyphs">4117.840</text>
<text x="1868" y="585" textLength="37" lengthAdjust="spacingAndGlyphs">4101.160</text>
<text x="1868" y="617" textLength="37" lengthAdjust="spacingAndGlyphs">4084.480</text>
<text x="1868" y="649" textLength="37" lengthAdjust="spacingAndGlyphs">4067.800</text>
<text x="1868" y="681" textLength="37" lengthAdjust="spacingAndGlyphs">4051.120</text>
<text x="1868" y="713" textLength="37" lengthAdjust="spacingAndGlyphs">4034.440</text>
<text x="1868" y="745" textLength="37" lengthAdjust="spacingAndGlyphs">4017.760</text>
<text x="2" y="785.7" textLength="50.4" lengthAdjust="spacingAndGlyphs">20 Oct 2025</text>
<text x="66" y="785.7" textLength="53.0" lengthAdjust="spacingAndGlyphs">21 Oct 00:00</text>
<text x="130" y="785.7" textLength="53.0" lengthAdjust="spacingAndGlyphs">21 Oct 04:00</text>
<text x="194" y="785.7" textLength="53.0" lengthAdjust="spacingAndGlyphs">21 Oct 08:00</text>
<text x="258" y="785.7" textLength="53.0" lengthAdjust="spacingAndGlyphs">21 Oct 12:00</text>
<text x="322" y="785.7" textLength="53.0" lengthAdjust="spacingAndGlyphs">21 Oct 16:00</text>
<text x="386" y="785.7" textLength="53.0" lengthAdjust="spacingAndGlyphs">21 Oct 20:00</text>
<text x="450" y="785.7" textLength="53.0" lengthAdjust="spacingAndGlyphs">22 Oct 01:00</text>
<text x="514" y="785.7" textLength="53.0" lengthAdjust="spacingAndGlyphs">22 Oct 05:00</text>
<text x="578" y="785.7" textLength="53.0" lengthAdjust="spacingAndGlyphs">22 Oct 09:00</text>
<text x="642" y="785.7" textLength="53.0" lengthAdjust="spacingAndGlyphs">22 Oct 13:00</text>
<text x="706" y="785.7" textLength="53.0" lengthAdjust="spacingAndGlyphs">22 Oct 17:00</text>
<text x="770" y="785.7" textLength="53.0" lengthAdjust="spacingAndGlyphs">22 Oct 22:00</text>
<text x="834" y="785.7" textLength="53.0" lengthAdjust="spacingAndGlyphs">23 Oct 02:00</text>
<text x="898" y="785.7" textLength="53.0" lengthAdjust="spacingAndGlyphs">23 Oct 06:00</text>
<text x="962" y="785.7" textLength="53.0" lengthAdjust="spacingAndGlyphs">23 Oct 10:00</text>
<text x="1026" y="785.7" textLength="53.0" lengthAdjust="spacingAndGlyphs">23 Oct 14:00</text>
<text x="1090" y="785.7" textLength="53.0" lengthAdjust="spacingAndGlyphs">23 Oct 18:00</text>
<text x="1154" y="785.7" textLength="53.0" lengthAdjust="spacingAndGlyphs">23 Oct 23:00</text>
<text x="1218" y="785.7" textLength="53.0" lengthAdjust="spacingAndGlyphs">24 Oct 03:00</text>
<text x="1282" y="785.7" textLength="53.0" lengthAdjust="spacingAndGlyphs">24 Oct 07:00</text>
<text x="1346" y="785.7" textLength="52.3" lengthAdjust="spacingAndGlyphs">24 Oct 11:00</text>
<text x="1410" y="785.7" textLength="53.0" lengthAdjust="spacingAndGlyphs">24 Oct 15:00</text>
<text x="1474" y="785.7" textLength="53.0" lengthAdjust="spacingAndGlyphs">24 Oct 19:00</text>
</g>
<rect x="1865" y="553" width="44" height="11" fill="#c0c0c0"/>
<text x="1868" y="562" font-family="Liberation Sans, sans-serif" font-size="9.5" letter-spacing="-0.3" fill="#fff">4113.106</text>
</svg>
<div class="a" style="left:2px;top:72px;width:2px;height:13px;background:#000"></div>
<svg class="a" style="left:12px;top:47px" width="10" height="6"><path d="M1.5 5V2.5H3.5V5" fill="none" stroke="#000"/><rect x="5" y="2" width="3" height="4" fill="#000"/></svg>
<div class="a" style="left:7px;top:37px;width:16px;height:12px">
 <svg width="16" height="14"><rect x="0.5" y="0.5" width="7" height="10" fill="#fff" stroke="#e03030"/><rect x="7.5" y="0.5" width="7" height="10" fill="#fff" stroke="#1a66b0"/><path d="M2 3.5H6M2 5.5H6M2 7.5H6" stroke="#e03030"/><path d="M9 3.5H13M9 5.5H13M9 7.5H13" stroke="#1a66b0"/><path d="M5 13V11.5H6V13M7.5 13V11.5H8.5V13" stroke="#000" fill="none"/></svg>
</div>
<div class="a" style="left:28px;top:37px;width:16px;height:12px">
 <svg width="16" height="12"><path d="M0.5 0.5H3.5V4.5H6.5V10.5H0.5Z" fill="#fde0d0" stroke="#e03030"/><path d="M14.5 0.5H11.5V4.5H8.5V10.5H14.5Z" fill="#cde4fa" stroke="#1a66b0"/><rect x="5.5" y="0.5" width="4" height="2" fill="none" stroke="#a0a0a0"/></svg>
</div>
<div class="a" style="left:46px;top:34px;width:151px;height:15px;background:#fff"></div><div class="a" style="left:48.5px;top:38px;font-size:9.5px;line-height:9.5px;color:#000;white-space:nowrap;-webkit-text-stroke:0.3px #000">XAUUSD, M15:</div><div class="a" style="left:120.8px;top:38px;font-size:9.5px;line-height:9.5px;color:#000;white-space:nowrap;-webkit-text-stroke:0.3px #000">Gold vs US Dollar</div>
<!-- trade panel -->
<div class="a" style="left:4px;top:108px;width:190px;height:4px;background:#fff"></div>
<div class="a" style="left:49px;top:53px;width:100px;height:23px;background:#fff"></div>
<div class="a" style="left:6px;top:53px;width:44px;height:23px;border:1px solid #a8a8a8;border-bottom:none;background:linear-gradient(#f6f6f6,#dcdcdc)"></div>
<div class="a" style="left:10px;top:74px;width:36px;height:1px;background:#8a8a8a"></div>
<div class="a" style="left:15px;top:57px;font-size:12px;line-height:14px;color:#202020;transform:scaleX(0.83);transform-origin:left top">SELL</div>
<div class="a" style="left:149px;top:53px;width:44px;height:23px;border:1px solid #a8a8a8;border-bottom:none;background:linear-gradient(#f6f6f6,#dcdcdc)"></div>
<div class="a" style="left:153px;top:74px;width:36px;height:1px;background:#8a8a8a"></div>
<div class="a" style="left:159.4px;top:57px;font-size:12px;line-height:14px;color:#202020;transform:scaleX(0.86);transform-origin:left top">BUY</div>
<div class="a" style="left:52px;top:54px;width:95px;height:19px;border:1px solid #b8b8b8;background:#fafafa"></div>
<div class="a" style="left:71px;top:54px;width:56px;height:19px;border:1px solid #b8b8b8;background:#fff"></div>
<div class="a" style="left:71px;top:56px;width:53px;text-align:right;font-size:11.5px;line-height:14px;color:#202020">0.05</div>
<svg class="a" style="left:52px;top:54px" width="95" height="19"><path d="M5.5 8H11.5L8.5 11Z" fill="#101010"/><path d="M79.5 11H85.5L82.5 8Z" fill="#101010"/></svg>
<div class="a" style="left:6px;top:75px;width:93px;height:35px;border:1px solid #b0b0b0;border-top:none;background:linear-gradient(#dadada,#a9a9a9)"></div>
<div class="a" style="left:101px;top:75px;width:92px;height:35px;border:1px solid #b0b0b0;border-top:none;background:linear-gradient(#dadada,#a9a9a9)"></div>
<div class="a" style="left:19.3px;top:93px;font-size:11.5px;font-weight:bold;line-height:14px;color:#101010;transform:scaleX(0.94);transform-origin:left top">4113</div>
<div class="a" style="left:47px;top:76.5px;font-size:31px;line-height:34px;color:#000;letter-spacing:-1px">10</div>
<div class="a" style="left:83px;top:81px;font-size:11px;font-weight:bold;line-height:12px;color:#101010">6</div>
<div class="a" style="left:113px;top:93px;font-size:11.5px;font-weight:bold;line-height:14px;color:#101010;transform:scaleX(0.94);transform-origin:left top">4113</div>
<div class="a" style="left:141px;top:76.5px;font-size:31px;line-height:34px;color:#000;letter-spacing:-1px;transform:scaleX(0.93);transform-origin:left top">21</div>
<div class="a" style="left:178.5px;top:81px;font-size:11px;font-weight:bold;line-height:12px;color:#101010">8</div>

<div class="a" style="left:0;top:794px;width:1920px;height:1px;background:#000"></div>
<div class="a" style="left:0;top:795px;width:1920px;height:24px;background:#f0f0f0"></div>
<div class="a" style="left:0;top:797px;width:1px;height:15px;background:#a0a0a0"></div>
<div class="a" style="left:0;top:819px;width:1920px;height:1px;background:#a0a0a0"></div>
<div class="a" style="left:854px;top:794px;width:93px;height:19px;background:#fff;border:1px solid #000;border-top:none;box-shadow:1px 1px 0 #808080"></div>
<div class="a" style="left:15.00px;top:798.42px;font-size:12.5px;line-height:12.5px;color:#7a7a7a;white-space:nowrap;transform:scaleX(0.8562);transform-origin:left top;">USDJPY,H4</div>
<div class="a" style="left:96.00px;top:798.42px;font-size:12.5px;line-height:12.5px;color:#7a7a7a;white-space:nowrap;transform:scaleX(0.8487);transform-origin:left top;">USDJPY,H1</div>
<div class="a" style="left:177.00px;top:798.42px;font-size:12.5px;line-height:12.5px;color:#7a7a7a;white-space:nowrap;transform:scaleX(0.8610);transform-origin:left top;">USDJPY,M15</div>
<div class="a" style="left:266.00px;top:798.42px;font-size:12.5px;line-height:12.5px;color:#7a7a7a;white-space:nowrap;transform:scaleX(0.8444);transform-origin:left top;">EURUSD,H4</div>
<div class="a" style="left:351.00px;top:798.42px;font-size:12.5px;line-height:12.5px;color:#7a7a7a;white-space:nowrap;transform:scaleX(0.8444);transform-origin:left top;">EURUSD,H1</div>
<div class="a" style="left:436.00px;top:798.42px;font-size:12.5px;line-height:12.5px;color:#7a7a7a;white-space:nowrap;transform:scaleX(0.8563);transform-origin:left top;">EURUSD,M15</div>
<div class="a" style="left:530.00px;top:798.42px;font-size:12.5px;line-height:12.5px;color:#7a7a7a;white-space:nowrap;transform:scaleX(0.8338);transform-origin:left top;">EURJPY,H4</div>
<div class="a" style="left:611.00px;top:798.42px;font-size:12.5px;line-height:12.5px;color:#7a7a7a;white-space:nowrap;transform:scaleX(0.8338);transform-origin:left top;">EURJPY,H1</div>
<div class="a" style="left:692.00px;top:798.42px;font-size:12.5px;line-height:12.5px;color:#7a7a7a;white-space:nowrap;transform:scaleX(0.8477);transform-origin:left top;">EURJPY,M15</div>
<div class="a" style="left:779.00px;top:798.42px;font-size:12.5px;line-height:12.5px;color:#7a7a7a;white-space:nowrap;transform:scaleX(0.8805);transform-origin:left top;">XAUUSD,H1</div>
<div class="a" style="left:864.00px;top:798.42px;font-size:12.5px;line-height:12.5px;color:#000;white-space:nowrap;transform:scaleX(0.8888);transform-origin:left top;">XAUUSD,M15</div>
<div class="a" style="left:955.00px;top:798.42px;font-size:12.5px;line-height:12.5px;color:#7a7a7a;white-space:nowrap;transform:scaleX(0.9085);transform-origin:left top;">XAUUSD,H4</div>
<div class="a" style="left:85px;top:798px;width:1px;height:13px;background:#505050"></div>
<div class="a" style="left:165px;top:798px;width:1px;height:13px;background:#505050"></div>
<div class="a" style="left:254px;top:798px;width:1px;height:13px;background:#505050"></div>
<div class="a" style="left:339px;top:798px;width:1px;height:13px;background:#505050"></div>
<div class="a" style="left:424px;top:798px;width:1px;height:13px;background:#505050"></div>
<div class="a" style="left:517px;top:798px;width:1px;height:13px;background:#505050"></div>
<div class="a" style="left:599px;top:798px;width:1px;height:13px;background:#505050"></div>
<div class="a" style="left:680px;top:798px;width:1px;height:13px;background:#505050"></div>
<div class="a" style="left:769px;top:798px;width:1px;height:13px;background:#505050"></div>
<svg class="a" style="left:1880px;top:800px" width="30" height="10"><path d="M7 1.5V8.5L3.5 5Z" fill="#a8a8a8"/><path d="M24 1.5V8.5L27.5 5Z" fill="#a8a8a8"/></svg>
<div class="a" style="left:0;top:820px;width:16px;height:164px;background:#bccbd9"></div>
<svg class="a" style="left:3px;top:826px" width="10" height="10"><path d="M1.5 1.5L8.5 8.5M8.5 1.5L1.5 8.5" stroke="#000" stroke-width="1.6"/></svg>
<div class="a" style="left:16px;top:820px;width:2px;height:139px;background:#e8eef4"></div>
<div class="a" style="left:-37px;top:939px;width:90px;height:14px;font-size:12px;line-height:14px;color:#303030;transform:rotate(-90deg) scaleX(0.88);transform-origin:center;text-align:center;white-space:nowrap;letter-spacing:-1px">ツールボックス</div>
<div class="a" style="left:18px;top:820px;width:1886px;height:23px;background:#fff"></div>
<div class="a" style="left:24.00px;top:825.84px;font-size:12px;line-height:12px;color:#000;white-space:nowrap;">表題</div>
<div class="a" style="left:966.00px;top:825.84px;font-size:12px;line-height:12px;color:#000;white-space:nowrap;">差出人</div>
<div class="a" style="left:1343.00px;top:825.84px;font-size:12px;line-height:12px;color:#000;white-space:nowrap;">宛先</div>
<div class="a" style="left:1872px;top:825px;font-size:12px;line-height:14px;color:#000;white-space:nowrap">時間</div>
<div class="a" style="left:18px;top:843px;width:1886px;height:20px;background:#fff"></div>
<div class="a" style="left:39px;top:849px;width:14px;height:11px;background:#ffd200;border:1px solid #e0a000;border-radius:2px"></div>
<svg class="a" style="left:40px;top:850px" width="12" height="6"><path d="M0.5 0.5L6 4L11.5 0.5" fill="none" stroke="#d09000" stroke-width="1"/></svg>
<div class="a" style="left:57.00px;top:848.22px;font-size:12.5px;line-height:12.5px;-webkit-text-stroke:0.45px #000;color:#000;white-space:nowrap;transform:scaleX(0.9685);transform-origin:left top;">The List of Instruments Affected by High Importance News</div>
<div class="a" style="left:963.00px;top:848.22px;font-size:12.5px;line-height:12.5px;-webkit-text-stroke:0.45px #000;color:#000;white-space:nowrap;transform:scaleX(0.9596);transform-origin:left top;">Administration</div>
<div class="a" style="left:1341.00px;top:848.22px;font-size:12.5px;line-height:12.5px;-webkit-text-stroke:0.45px #000;color:#000;white-space:nowrap;transform:scaleX(1.0516);transform-origin:left top;">pro</div>
<div class="a" style="left:1834.00px;top:848.22px;font-size:12.5px;line-height:12.5px;-webkit-text-stroke:0.45px #000;color:#000;white-space:nowrap;transform:scaleX(0.9210);transform-origin:right top;">00:01 |</div>
<div class="a" style="left:1875.5px;top:846px;font-size:12px;line-height:14px;font-weight:bold;color:#000;white-space:nowrap;transform:scaleX(0.95);transform-origin:left top">本日</div>
<div class="a" style="left:18px;top:863px;width:1886px;height:20px;background:#ececec"></div>
<div class="a" style="left:18px;top:863px;width:1886px;height:1px;background:#d4d4d4"></div>
<div class="a" style="left:39px;top:869px;width:14px;height:11px;background:#ffd200;border:1px solid #e0a000;border-radius:2px"></div>
<svg class="a" style="left:40px;top:870px" width="12" height="6"><path d="M0.5 0.5L6 4L11.5 0.5" fill="none" stroke="#d09000" stroke-width="1"/></svg>
<div class="a" style="left:57.00px;top:868.22px;font-size:12.5px;line-height:12.5px;-webkit-text-stroke:0.45px #000;color:#000;white-space:nowrap;transform:scaleX(0.9685);transform-origin:left top;">The List of Instruments Affected by High Importance News</div>
<div class="a" style="left:963.00px;top:868.22px;font-size:12.5px;line-height:12.5px;-webkit-text-stroke:0.45px #000;color:#000;white-space:nowrap;transform:scaleX(0.9596);transform-origin:left top;">Administration</div>
<div class="a" style="left:1341.00px;top:868.22px;font-size:12.5px;line-height:12.5px;-webkit-text-stroke:0.45px #000;color:#000;white-space:nowrap;transform:scaleX(1.0516);transform-origin:left top;">pro</div>
<div class="a" style="left:1798.68px;top:868.22px;font-size:12.5px;line-height:12.5px;-webkit-text-stroke:0.45px #000;color:#000;white-space:nowrap;transform:scaleX(0.9454);transform-origin:right top;">2025.10.24 00:02</div>
<div class="a" style="left:18px;top:883px;width:1886px;height:20px;background:#fff"></div>
<div class="a" style="left:18px;top:883px;width:1886px;height:1px;background:#d4d4d4"></div>
<div class="a" style="left:39px;top:889px;width:14px;height:11px;background:#ffd200;border:1px solid #e0a000;border-radius:2px"></div>
<svg class="a" style="left:40px;top:890px" width="12" height="6"><path d="M0.5 0.5L6 4L11.5 0.5" fill="none" stroke="#d09000" stroke-width="1"/></svg>
<div class="a" style="left:57.00px;top:888.22px;font-size:12.5px;line-height:12.5px;-webkit-text-stroke:0.45px #000;color:#000;white-space:nowrap;transform:scaleX(0.9685);transform-origin:left top;">The List of Instruments Affected by High Importance News</div>
<div class="a" style="left:963.00px;top:888.22px;font-size:12.5px;line-height:12.5px;-webkit-text-stroke:0.45px #000;color:#000;white-space:nowrap;transform:scaleX(0.9596);transform-origin:left top;">Administration</div>
<div class="a" style="left:1341.00px;top:888.22px;font-size:12.5px;line-height:12.5px;-webkit-text-stroke:0.45px #000;color:#000;white-space:nowrap;transform:scaleX(1.0516);transform-origin:left top;">pro</div>
<div class="a" style="left:1798.68px;top:888.22px;font-size:12.5px;line-height:12.5px;-webkit-text-stroke:0.45px #000;color:#000;white-space:nowrap;transform:scaleX(0.9454);transform-origin:right top;">2025.10.23 08:37</div>
<div class="a" style="left:18px;top:903px;width:1886px;height:20px;background:#ececec"></div>
<div class="a" style="left:18px;top:903px;width:1886px;height:1px;background:#d4d4d4"></div>
<div class="a" style="left:39px;top:909px;width:14px;height:11px;background:#ffd200;border:1px solid #e0a000;border-radius:2px"></div>
<svg class="a" style="left:40px;top:910px" width="12" height="6"><path d="M0.5 0.5L6 4L11.5 0.5" fill="none" stroke="#d09000" stroke-width="1"/></svg>
<div class="a" style="left:57.00px;top:908.22px;font-size:12.5px;line-height:12.5px;-webkit-text-stroke:0.45px #000;color:#000;white-space:nowrap;transform:scaleX(0.9685);transform-origin:left top;">The List of Instruments Affected by High Importance News</div>
<div class="a" style="left:963.00px;top:908.22px;font-size:12.5px;line-height:12.5px;-webkit-text-stroke:0.45px #000;color:#000;white-space:nowrap;transform:scaleX(0.9596);transform-origin:left top;">Administration</div>
<div class="a" style="left:1341.00px;top:908.22px;font-size:12.5px;line-height:12.5px;-webkit-text-stroke:0.45px #000;color:#000;white-space:nowrap;transform:scaleX(1.0516);transform-origin:left top;">pro</div>
<div class="a" style="left:1798.68px;top:908.22px;font-size:12.5px;line-height:12.5px;-webkit-text-stroke:0.45px #000;color:#000;white-space:nowrap;transform:scaleX(0.9454);transform-origin:right top;">2025.10.23 00:02</div>
<div class="a" style="left:18px;top:923px;width:1886px;height:20px;background:#fff"></div>
<div class="a" style="left:18px;top:923px;width:1886px;height:1px;background:#d4d4d4"></div>
<div class="a" style="left:39px;top:929px;width:14px;height:11px;background:#ffd200;border:1px solid #e0a000;border-radius:2px"></div>
<svg class="a" style="left:40px;top:930px" width="12" height="6"><path d="M0.5 0.5L6 4L11.5 0.5" fill="none" stroke="#d09000" stroke-width="1"/></svg>
<div class="a" style="left:57.00px;top:928.22px;font-size:12.5px;line-height:12.5px;-webkit-text-stroke:0.45px #000;color:#000;white-space:nowrap;transform:scaleX(0.9685);transform-origin:left top;">The List of Instruments Affected by High Importance News</div>
<div class="a" style="left:963.00px;top:928.22px;font-size:12.5px;line-height:12.5px;-webkit-text-stroke:0.45px #000;color:#000;white-space:nowrap;transform:scaleX(0.9596);transform-origin:left top;">Administration</div>
<div class="a" style="left:1341.00px;top:928.22px;font-size:12.5px;line-height:12.5px;-webkit-text-stroke:0.45px #000;color:#000;white-space:nowrap;transform:scaleX(1.0516);transform-origin:left top;">pro</div>
<div class="a" style="left:1798.68px;top:928.22px;font-size:12.5px;line-height:12.5px;-webkit-text-stroke:0.45px #000;color:#000;white-space:nowrap;transform:scaleX(0.9454);transform-origin:right top;">2025.10.22 00:01</div>
<div class="a" style="left:18px;top:943px;width:1886px;height:16px;background:#ececec"></div>
<div class="a" style="left:18px;top:943px;width:1886px;height:1px;background:#d4d4d4"></div>
<div class="a" style="left:39px;top:949px;width:14px;height:11px;background:#ffd200;border:1px solid #e0a000;border-radius:2px"></div>
<svg class="a" style="left:40px;top:950px" width="12" height="6"><path d="M0.5 0.5L6 4L11.5 0.5" fill="none" stroke="#d09000" stroke-width="1"/></svg>
<div class="a" style="left:57.00px;top:948.22px;font-size:12.5px;line-height:12.5px;-webkit-text-stroke:0.45px #000;color:#000;white-space:nowrap;transform:scaleX(0.9685);transform-origin:left top;">The List of Instruments Affected by High Importance News</div>
<div class="a" style="left:963.00px;top:948.22px;font-size:12.5px;line-height:12.5px;-webkit-text-stroke:0.45px #000;color:#000;white-space:nowrap;transform:scaleX(0.9596);transform-origin:left top;">Administration</div>
<div class="a" style="left:1341.00px;top:948.22px;font-size:12.5px;line-height:12.5px;-webkit-text-stroke:0.45px #000;color:#000;white-space:nowrap;transform:scaleX(1.0516);transform-origin:left top;">pro</div>
<div class="a" style="left:1798.68px;top:948.22px;font-size:12.5px;line-height:12.5px;-webkit-text-stroke:0.45px #000;color:#000;white-space:nowrap;transform:scaleX(0.9454);transform-origin:right top;">2025.10.21 12:08</div>
<div class="a" style="left:959px;top:820px;width:1px;height:23px;background:#a0a0a0"></div>
<div class="a" style="left:959px;top:843px;width:1px;height:116px;background:#d4d4d4"></div>
<div class="a" style="left:1336px;top:820px;width:1px;height:23px;background:#a0a0a0"></div>
<div class="a" style="left:1336px;top:843px;width:1px;height:116px;background:#d4d4d4"></div>
<div class="a" style="left:1752px;top:820px;width:1px;height:23px;background:#a0a0a0"></div>
<div class="a" style="left:1752px;top:843px;width:1px;height:116px;background:#d4d4d4"></div>
<div class="a" style="left:1904px;top:820px;width:16px;height:139px;background:#f0f0f0"></div>
<div class="a" style="left:1911px;top:837px;width:2px;height:17px;background:#808080"></div>
<div class="a" style="left:18px;top:959px;width:1902px;height:1px;background:#000"></div>
<div class="a" style="left:16px;top:960px;width:1904px;height:24px;background:#f0f0f0"></div>
<div class="a" style="left:0;top:984px;width:1920px;height:1px;background:#a0a0a0"></div>
<div class="a" style="left:257px;top:959px;width:80px;height:20px;background:#fff;border:1px solid #000;border-top:none;box-shadow:1px 1px 0 #808080"></div>
<div class="a" style="left:33px;top:962px;font-size:12.5px;line-height:14px;color:#7a7a7a;white-space:nowrap;transform:scaleX(0.920);transform-origin:left top">取引</div>
<div class="a" style="left:77px;top:962px;font-size:12.5px;line-height:14px;color:#7a7a7a;white-space:nowrap;transform:scaleX(0.960);transform-origin:left top">運用比率</div>
<div class="a" style="left:146px;top:962px;font-size:12.5px;line-height:14px;color:#7a7a7a;white-space:nowrap;transform:scaleX(0.920);transform-origin:left top">口座履歴</div>
<div class="a" style="left:213px;top:962px;font-size:12.5px;line-height:14px;color:#7a7a7a;white-space:nowrap;transform:scaleX(0.680);transform-origin:left top">ニュース</div>
<div class="a" style="left:267px;top:962px;font-size:12.5px;line-height:14px;color:#000;white-space:nowrap;transform:scaleX(0.800);transform-origin:left top">受信トレイ</div>
<div class="a" style="left:345px;top:962px;font-size:12.5px;line-height:14px;color:#7a7a7a;white-space:nowrap;transform:scaleX(0.777);transform-origin:left top">指標カレンダー</div>
<div class="a" style="left:435px;top:962px;font-size:12.5px;line-height:14px;color:#7a7a7a;white-space:nowrap;transform:scaleX(0.920);transform-origin:left top">会社</div>
<div class="a" style="left:478px;top:962px;font-size:12.5px;line-height:14px;color:#7a7a7a;white-space:nowrap;transform:scaleX(0.660);transform-origin:left top">アラート</div>
<div class="a" style="left:531px;top:962px;font-size:12.5px;line-height:14px;color:#7a7a7a;white-space:nowrap;transform:scaleX(0.920);transform-origin:left top">記事</div>
<div class="a" style="left:575px;top:962px;font-size:12.5px;line-height:14px;color:#7a7a7a;white-space:nowrap;transform:scaleX(0.672);transform-origin:left top">ライブラリ</div>
<div class="a" style="left:637px;top:962px;font-size:12.5px;line-height:14px;color:#7a7a7a;white-space:nowrap;transform:scaleX(0.707);transform-origin:left top">エキスパート</div>
<div class="a" style="left:710px;top:962px;font-size:12.5px;line-height:14px;color:#7a7a7a;white-space:nowrap;transform:scaleX(0.840);transform-origin:left top">操作ログ</div>
<div class="a" style="left:320px;top:969px;font-size:9px;line-height:10px;color:#e00000;font-weight:bold">7</div>
<div class="a" style="left:68px;top:962px;width:1px;height:13px;background:#505050"></div>
<div class="a" style="left:136px;top:962px;width:1px;height:13px;background:#505050"></div>
<div class="a" style="left:204px;top:962px;width:1px;height:13px;background:#505050"></div>
<div class="a" style="left:425px;top:962px;width:1px;height:13px;background:#505050"></div>
<div class="a" style="left:468px;top:962px;width:1px;height:13px;background:#505050"></div>
<div class="a" style="left:521px;top:962px;width:1px;height:13px;background:#505050"></div>
<div class="a" style="left:565px;top:962px;width:1px;height:13px;background:#505050"></div>
<div class="a" style="left:627px;top:962px;width:1px;height:13px;background:#505050"></div>
<div class="a" style="left:700px;top:962px;width:1px;height:13px;background:#505050"></div>
<svg class="a" style="left:1680px;top:964px" width="14" height="15"><path d="M2.5 5.5H11.5L12.5 13.5H1.5Z" fill="#ffd000" stroke="#e0a000"/><path d="M4.5 6V3.5A2.5 2.5 0 0 1 9.5 3.5V6" fill="none" stroke="#a07000"/></svg>
<div class="a" style="left:1699px;top:963px;font-size:12.5px;line-height:14px;color:#202020">市場</div>
<svg class="a" style="left:1734px;top:965px" width="18" height="12"><path d="M4 1.5Q0.5 6 4 10.5M14 1.5Q17.5 6 14 10.5M6.5 3.5Q4.5 6 6.5 8.5M11.5 3.5Q13.5 6 11.5 8.5" fill="none" stroke="#1a66b0" stroke-width="1.3"/><circle cx="9" cy="6" r="1.5" fill="#1a66b0"/></svg>
<div class="a" style="left:1755px;top:963px;font-size:12.5px;line-height:14px;color:#202020;white-space:nowrap;transform:scaleX(0.70);transform-origin:left top">シグナル</div>
<svg class="a" style="left:1804px;top:964px" width="12" height="16"><path d="M3 11.5A3 3 0 0 1 4 5.5A4 4 0 0 1 11.5 5V11.5Z" fill="#bfe0fa" stroke="#1a66b0" stroke-width="1.3"/><path d="M2 14.5H11" stroke="#1a66b0" stroke-width="1.3"/></svg>
<div class="a" style="left:0;top:985px;width:1920px;height:21px;background:#f0f0f0"></div>
<div class="a" style="left:2px;top:988px;font-size:12.5px;line-height:15px;color:#202020;white-space:nowrap;transform:scaleX(0.87);transform-origin:left top">F1を押してヘルプを開く</div>
<div class="a" style="left:1160px;top:988px;width:1px;height:18px;background:#a0a0a0"></div>
<div class="a" style="left:1263px;top:988px;width:1px;height:18px;background:#a0a0a0"></div>
<div class="a" style="left:1361px;top:988px;width:1px;height:18px;background:#a0a0a0"></div>
<div class="a" style="left:1447px;top:988px;width:1px;height:18px;background:#a0a0a0"></div>
<div class="a" style="left:1533px;top:988px;width:1px;height:18px;background:#a0a0a0"></div>
<div class="a" style="left:1619px;top:988px;width:1px;height:18px;background:#a0a0a0"></div>
<div class="a" style="left:1705px;top:988px;width:1px;height:18px;background:#a0a0a0"></div>
<div class="a" style="left:1801px;top:988px;width:1px;height:18px;background:#a0a0a0"></div>
<div class="a" style="left:1166.00px;top:990.42px;font-size:12.5px;line-height:12.5px;color:#202020;white-space:nowrap;transform:scaleX(0.9274);transform-origin:left top;">atari3</div>
<div class="a" style="left:1269.00px;top:990.42px;font-size:12.5px;line-height:12.5px;color:#202020;white-space:nowrap;transform:scaleX(0.8734);transform-origin:left top;">2025.10.23 12:15</div>
<div class="a" style="left:1367.00px;top:990.42px;font-size:12.5px;line-height:12.5px;color:#202020;white-space:nowrap;transform:scaleX(0.8720);transform-origin:left top;">O: 4105.049</div>
<div class="a" style="left:1453.00px;top:990.42px;font-size:12.5px;line-height:12.5px;color:#202020;white-space:nowrap;transform:scaleX(0.8931);transform-origin:left top;">H: 4110.051</div>
<div class="a" style="left:1539.00px;top:990.42px;font-size:12.5px;line-height:12.5px;color:#202020;white-space:nowrap;transform:scaleX(0.8632);transform-origin:left top;">L: 4100.158</div>
<div class="a" style="left:1625.00px;top:990.42px;font-size:12.5px;line-height:12.5px;color:#202020;white-space:nowrap;transform:scaleX(0.8516);transform-origin:left top;">C: 4109.323</div>
<div class="a" style="left:1711.00px;top:990.42px;font-size:12.5px;line-height:12.5px;color:#202020;white-space:nowrap;transform:scaleX(0.8727);transform-origin:left top;">V: 0</div>
<svg class="a" style="left:1805px;top:995px" width="10" height="8"><rect x="1" y="5" width="2" height="3" fill="#20a020"/><rect x="4" y="3" width="2" height="5" fill="#20a020"/><rect x="7" y="1" width="2" height="7" fill="#20a020"/></svg>
<div class="a" style="left:1813px;top:959px;width:107px;height:47px;background:#000"></div>
<div class="a" style="left:1841.00px;top:960.69px;font-size:11px;line-height:11px;color:#fff;white-space:nowrap;transform:scaleX(0.9285);transform-origin:left top;">11:34:26</div>
<div class="a" style="left:1841px;top:974px;width:38px;font-size:11.5px;line-height:14px;color:#fff;text-align:center;letter-spacing:0px;white-space:nowrap">日曜日</div>
<div class="a" style="left:1819.00px;top:992.27px;font-size:11.5px;line-height:11.5px;color:#fff;white-space:nowrap;transform:scaleX(1.0598);transform-origin:left top;">2025/10/26</div>
</body></html>
